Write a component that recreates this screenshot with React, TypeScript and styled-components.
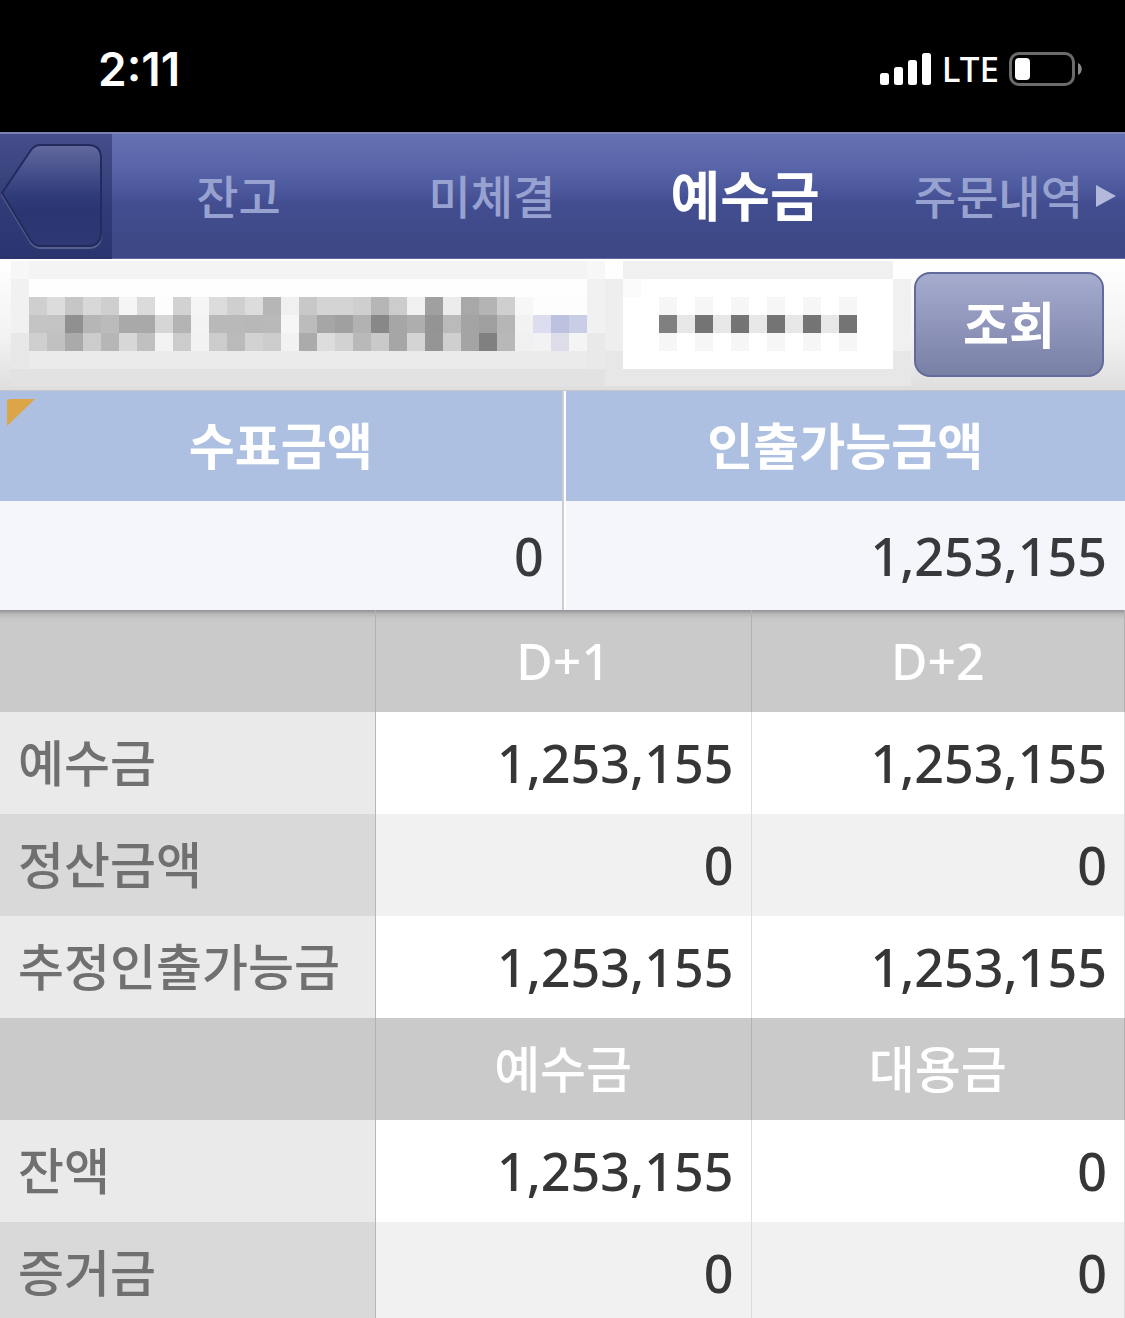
import React from "react";
import styled, { createGlobalStyle, css } from "styled-components";

const GlobalStyle = createGlobalStyle`
  *, *::before, *::after { box-sizing: border-box; }
  body {
    margin: 0;
    background: #ffffff;
    font-family: "Noto Sans", "Noto Sans CJK KR", sans-serif;
    font-weight: 500;
  }
`;

const Screen = styled.div`
  display: flex;
  flex-direction: column;
  height: 100vh;
  overflow: hidden;
`;

const StatusBar = styled.header`
  display: flex;
  flex: none;
  align-items: center;
  justify-content: space-between;
  height: 132px;
  padding: 6px 42px 0 98px;
  background: #000000;
  color: #ffffff;
`;

const Clock = styled.time`
  font-family: Inter, sans-serif;
  font-size: 46px;
  font-weight: 600;
  line-height: 52px;
`;

const StatusIcons = styled.div`
  display: flex;
  align-items: center;
  gap: 10px;
`;

const Carrier = styled.span`
  font-size: 35px;
  font-weight: 500;
  line-height: 40px;
`;

const NavBar = styled.nav`
  position: relative;
  display: flex;
  flex: none;
  height: 127px;
  border-top: 2px solid #7d83b3;
  border-bottom: 1px solid #656b9f;
  background: linear-gradient(#6671b3 0%, #5a66a9 25%, #4e5a9e 42%, #424e90 56%, #3f4a89 80%, #3e4785 100%);
`;

const BackButton = styled.button`
  flex: none;
  width: 112px;
  margin: 0 0 -1px;
  padding: 0;
  border: 0;
  background: linear-gradient(#454e8b 0%, #3b4580 30%, #2f3a77 60%, #2a3570 100%);

  svg { display: block; }
`;

const TabList = styled.div`
  display: flex;
  flex: 1;
`;

const Tab = styled.a<{ $active?: boolean }>`
  display: flex;
  flex: 1 1 0;
  align-items: center;
  justify-content: center;
  color: #98a2d0;
  font-size: 46px;
  line-height: 60px;
  text-decoration: none;
  white-space: nowrap;

  ${(p) =>
    p.$active &&
    css`
      color: #ffffff;
      font-size: 54px;
      font-weight: 700;
    `}
`;

const MoreArrow = styled.svg`
  position: absolute;
  top: 50px;
  right: 9px;
`;

const QueryBar = styled.form`
  display: flex;
  flex: none;
  align-items: center;
  height: 132px;
  padding-right: 21px;
  border-bottom: 1px solid #c6c6c8;
  background: linear-gradient(#ffffff, #f2f2f2 60%, #dedede);
`;

const AccountPicker = styled.button`
  flex: 1;
  min-width: 0;
  height: 131px;
  padding: 0;
  overflow: hidden;
  border: 0;
  background: none;

  svg { display: block; }
`;

const PasswordField = styled.label`
  display: grid;
  flex: none;
  height: 131px;

  & > * { grid-area: 1 / 1; }
`;

const PasswordInput = styled.input`
  width: 100%;
  min-width: 0;
  border: 0;
  outline: 0;
  background: transparent;
`;

const QueryButton = styled.button`
  flex: none;
  width: 190px;
  height: 105px;
  padding: 0;
  border: 2px solid #626a9b;
  border-radius: 16px;
  background: linear-gradient(#a6acce, #9298bd 45%, #7980a5);
  color: #ffffff;
  font-family: inherit;
  font-size: 50px;
  font-weight: 700;
  line-height: 60px;
`;

const SummaryTable = styled.table`
  flex: none;
  width: 100%;
  border-collapse: separate;
  border-spacing: 0;
  table-layout: fixed;
`;

const SummaryFirstColumn = styled.col`
  width: 50.1%;
`;

const summaryDivider = css`
  &:first-child {
    border-right: 2px solid #cbcdd0;
  }
  &:last-child {
    border-left: 2px solid #ffffff;
  }
`;

const SummaryHead = styled.th`
  position: relative;
  height: 110px;
  padding: 0;
  background: #aec0e1;
  color: #ffffff;
  font-size: 50px;
  font-weight: 700;
  line-height: 60px;
  ${summaryDivider}
`;

const SummaryValue = styled.td`
  height: 109px;
  padding: 0 18px;
  background: #f4f6fb;
  color: #38393b;
  font-size: 52px;
  line-height: 60px;
  text-align: right;
  ${summaryDivider}
`;

const CornerMark = styled.svg`
  position: absolute;
  top: 7px;
  left: 7px;
`;

const DetailTable = styled.table`
  flex: none;
  width: 100%;
  border-collapse: separate;
  border-spacing: 0;
  table-layout: fixed;
`;

const LabelColumn = styled.col`
  width: 33.4%;
`;

const GroupHead = styled.th<{ $shaded?: boolean }>`
  height: 102px;
  padding: 0;
  border-right: 1px solid #b2b2b2;
  background: ${(p) =>
    p.$shaded ? "linear-gradient(#929294, #b8b8b8 4px, #c6c6c6 8px, #cacaca 12px)" : "#cacaca"};
  color: #ffffff;
  font-size: 50px;
  font-weight: 500;
  line-height: 60px;
`;

const RowLabel = styled.th<{ $alt: boolean }>`
  height: 102px;
  padding: 0 0 0 18px;
  border-right: 1px solid #b8b8b8;
  background: ${(p) => (p.$alt ? "#d9d9d9" : "#eaeaea")};
  color: #707070;
  font-size: 50px;
  font-weight: 500;
  line-height: 60px;
  text-align: left;
  white-space: nowrap;
`;

const Amount = styled.td<{ $alt: boolean }>`
  height: 102px;
  padding: 0 17px;
  border-right: 1px solid #dcdcdc;
  background: ${(p) => (p.$alt ? "#f1f1f1" : "#ffffff")};
  color: #363636;
  font-size: 52px;
  line-height: 60px;
  text-align: right;
`;

const CELL = 18;

/* Grey level of every block in the masked account number, row by row. */
const ACCOUNT_ROWS = [
  "cf dc c6 d8 cf f5 db fd d2 f5 dc cf dc b6 f0 c8 d4 d4 cf b6 cc f0 a0 ec a8 b4 cf f7 fd fd fd",
  "c4 c3 90 b6 bb a9 a9 d6 b4 f3 b9 b9 b8 b9 f6 bc a6 a0 b2 88 a6 ae 94 ba a4 9f b6 f2 dcddee bdc1e0 cacde6",
  "cf c1 aa cc b6 d7 c0 f3 cc f2 cc ba d2 cc f2 ab dd d2 b9 c9 a6 d4 95 cf a4 80 b8 f0 f2f2f5 dddde9 f4",
].map((row) => row.split(" ").map((v) => (v.length === 2 ? `#${v}${v}${v}` : `#${v}`)));

function AccountMask() {
  return (
    <svg width="623" height="131" viewBox="0 0 623 131" shapeRendering="crispEdges" aria-hidden="true">
      <rect x="11" y="2" width="18" height="18" fill="#f7f7f7" />
      <rect x="11" y="20" width="18" height="54" fill="#f1f1f1" />
      <rect x="11" y="74" width="18" height="36" fill="#e8e8e8" />
      <rect x="29" y="2" width="558" height="18" fill="#f4f4f4" />
      <rect x="29" y="20" width="558" height="18" fill="#fefefe" />
      <rect x="29" y="92" width="558" height="18" fill="#ebebeb" />
      <rect x="11" y="110" width="594" height="17" fill="#e2e2e2" />
      <rect x="587" y="2" width="18" height="18" fill="#f7f7f7" />
      <rect x="587" y="20" width="18" height="54" fill="#f1f1f1" />
      <rect x="587" y="74" width="18" height="36" fill="#e9e9e9" />
      <rect x="605" y="2" width="18" height="18" fill="#fefefe" />
      <rect x="605" y="20" width="18" height="72" fill="#eeeeee" />
      <rect x="605" y="92" width="18" height="35" fill="#e7e7e7" />
      {ACCOUNT_ROWS.map((row, r) =>
        row.map((fill, c) => (
          <rect key={`${r}-${c}`} x={29 + c * CELL} y={38 + r * CELL} width={CELL} height={CELL} fill={fill} />
        ))
      )}
    </svg>
  );
}

function PasswordMask() {
  return (
    <svg width="291" height="131" viewBox="0 0 291 131" shapeRendering="crispEdges" aria-hidden="true">
      <rect x="0" y="2" width="270" height="18" fill="#f0f0f0" />
      <rect x="0" y="20" width="270" height="90" fill="#ffffff" />
      <rect x="0" y="20" width="18" height="18" fill="#fbfbfb" />
      <rect x="0" y="110" width="270" height="17" fill="#e7e7e7" />
      <rect x="270" y="2" width="18" height="18" fill="#fefefe" />
      <rect x="270" y="20" width="18" height="72" fill="#f0f0f0" />
      <rect x="270" y="92" width="18" height="35" fill="#e7e7e7" />
      <rect x="54" y="56" width="162" height="18" fill="#e7e7e7" />
      {[0, 1, 2, 3, 4, 5].map((i) => (
        <g key={i}>
          <rect x={36 + i * 36} y="38" width={CELL} height="54" fill="#f6f6f6" />
          <rect x={36 + i * 36} y="56" width={CELL} height={CELL} fill={i === 0 ? "#808080" : "#747474"} />
        </g>
      ))}
    </svg>
  );
}

function SignalIcon() {
  return (
    <svg width="52" height="34" viewBox="0 0 52 34" fill="#ffffff" aria-hidden="true">
      <rect x="0" y="21" width="9" height="12" rx="2.5" />
      <rect x="14" y="15" width="9" height="18" rx="2.5" />
      <rect x="28" y="8" width="9" height="25" rx="2.5" />
      <rect x="42" y="1" width="9" height="32" rx="2.5" />
    </svg>
  );
}

function BatteryIcon() {
  return (
    <svg width="74" height="34" viewBox="0 0 74 34" aria-hidden="true">
      <rect x="1.5" y="1.5" width="63" height="31" rx="8.5" fill="none" stroke="#6b6b6b" strokeWidth="3" />
      <rect x="6" y="6" width="15" height="22" rx="4" fill="#ffffff" />
      <path d="M69 11c5 2 5 10 0 12z" fill="#8a8a8a" />
    </svg>
  );
}

function BackShape() {
  return (
    <svg width="112" height="124" viewBox="0 1 112 124" aria-hidden="true">
      <defs>
        <linearGradient id="backFill" x1="0" y1="0" x2="0" y2="1">
          <stop offset="0" stopColor="#626a9e" />
          <stop offset="0.3" stopColor="#434d89" />
          <stop offset="0.5" stopColor="#303b7a" />
          <stop offset="0.66" stopColor="#2a3571" />
          <stop offset="1" stopColor="#2e3974" />
        </linearGradient>
      </defs>
      <path
        d="M2 61 31 17Q35 12 40 12H88Q101 12 101 25V101Q101 114 88 114H40Q35 114 31 109Z"
        fill="none"
        stroke="#56608f"
        strokeWidth="2"
      />
      <path
        d="M2 59 31 16Q35 11 40 11H88Q101 11 101 24V98Q101 112 88 112H40Q35 112 31 107Z"
        fill="url(#backFill)"
        stroke="#232b5c"
        strokeWidth="2"
      />
    </svg>
  );
}

const TABS = ["잔고", "미체결", "예수금", "주문내역"];

const GROUPS = [
  {
    columns: ["D+1", "D+2"],
    rows: [
      ["예수금", "1,253,155", "1,253,155"],
      ["정산금액", "0", "0"],
      ["추정인출가능금", "1,253,155", "1,253,155"],
    ],
  },
  {
    columns: ["예수금", "대용금"],
    rows: [
      ["잔액", "1,253,155", "0"],
      ["증거금", "0", "0"],
    ],
  },
];

export default function App() {
  return (
    <Screen>
      <GlobalStyle />
      <StatusBar>
        <Clock>2:11</Clock>
        <StatusIcons>
          <SignalIcon />
          <Carrier>LTE</Carrier>
          <BatteryIcon />
        </StatusIcons>
      </StatusBar>

      <NavBar>
        <BackButton type="button" aria-label="뒤로">
          <BackShape />
        </BackButton>
        <TabList>
          {TABS.map((name) => (
            <Tab key={name} href="#" $active={name === "예수금"}>
              {name}
            </Tab>
          ))}
        </TabList>
        <MoreArrow width="20" height="24" viewBox="0 0 20 24" aria-hidden="true">
          <path d="M0 1 20 12 0 23Z" fill="#b4b9dc" />
        </MoreArrow>
      </NavBar>

      <QueryBar onSubmit={(e) => e.preventDefault()}>
        <AccountPicker type="button" aria-label="계좌번호">
          <AccountMask />
        </AccountPicker>
        <PasswordField>
          <PasswordMask />
          <PasswordInput type="password" aria-label="비밀번호" />
        </PasswordField>
        <QueryButton type="submit">조회</QueryButton>
      </QueryBar>

      <SummaryTable>
        <colgroup>
          <SummaryFirstColumn />
          <col />
        </colgroup>
        <thead>
          <tr>
            <SummaryHead scope="col">
              <CornerMark width="29" height="29" viewBox="0 0 29 29" aria-hidden="true">
                <path d="M0 4Q0 1 4 1H28L0 28Z" fill="#dba548" />
              </CornerMark>
              수표금액
            </SummaryHead>
            <SummaryHead scope="col">인출가능금액</SummaryHead>
          </tr>
        </thead>
        <tbody>
          <tr>
            <SummaryValue>0</SummaryValue>
            <SummaryValue>1,253,155</SummaryValue>
          </tr>
        </tbody>
      </SummaryTable>

      <DetailTable>
        <colgroup>
          <LabelColumn />
          <LabelColumn />
          <col />
        </colgroup>
        {GROUPS.map((group, g) => (
          <tbody key={g}>
            <tr>
              <GroupHead as="td" $shaded={g === 0} />
              {group.columns.map((name) => (
                <GroupHead key={name} scope="col" $shaded={g === 0}>
                  {name}
                </GroupHead>
              ))}
            </tr>
            {group.rows.map(([label, ...amounts], r) => (
              <tr key={label}>
                <RowLabel scope="row" $alt={r % 2 === 1}>
                  {label}
                </RowLabel>
                {amounts.map((amount, i) => (
                  <Amount key={i} $alt={r % 2 === 1}>
                    {amount}
                  </Amount>
                ))}
              </tr>
            ))}
          </tbody>
        ))}
      </DetailTable>
    </Screen>
  );
}
